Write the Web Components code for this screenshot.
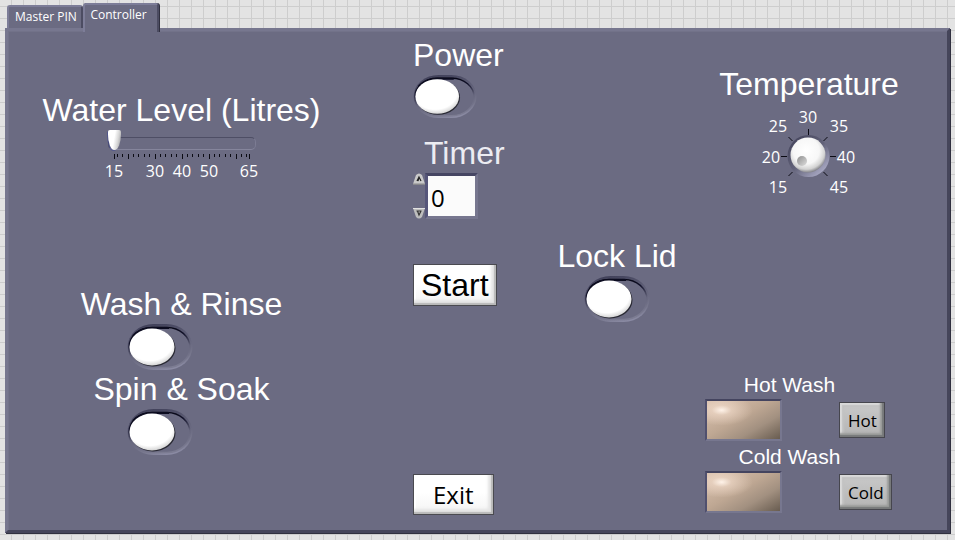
<!DOCTYPE html>
<html lang="en">
<head>
<meta charset="utf-8">
<title>Washing Machine Controller</title>
<style>
  html { height: 100%; }
  body {
    margin: 0; min-height: 100%; box-sizing: border-box; padding: 3px 5px 7px 5px;
    display: flex; flex-direction: column;
    font-family: "Liberation Sans", Arial, sans-serif; color: #fff;
    background:
      linear-gradient(90deg, #cdcdcd 1px, transparent 1px) 11px 0 / 12px 12px,
      linear-gradient(#cdcdcd 1px, transparent 1px) 0 6px / 12px 12px #e3e3e3;
    --ui: "Open Sans", "Noto Sans", sans-serif;
    --panel: #6b6b82;
  }
</style>
</head>
<body>
<wm-tabs></wm-tabs>
<wm-panel>
  <wm-column style="--top:61px; --align:center">
    <wm-slider label="Water Level (Litres)"></wm-slider>
    <wm-switch label="Wash &amp; Rinse" style="--before:105px; --shift:42px"></wm-switch>
    <wm-switch label="Spin &amp; Soak" style="--shift:42px"></wm-switch>
  </wm-column>
  <wm-column style="--top:6px; --align:flex-start">
    <wm-switch label="Power" style="--w:64px; --h:45px; --align:flex-start"></wm-switch>
    <wm-number label="Timer" style="--before:16px"></wm-number>
    <wm-button style="--before:45px; --face:'Liberation Sans'; --size:32px; --pad:7px; --height:42px">Start</wm-button>
    <wm-button style="--before:168px; --size:24px; --pad:19px; --height:41px">Exit</wm-button>
  </wm-column>
  <wm-column style="--top:207px; --align:center">
    <wm-switch label="Lock Lid"></wm-switch>
  </wm-column>
  <wm-column style="--top:35px; --align:center">
    <wm-knob label="Temperature"></wm-knob>
    <wm-led label="Hot Wash" style="--before:173px"><wm-button class="grey">Hot</wm-button></wm-led>
    <wm-led label="Cold Wash" style="--before:4px"><wm-button class="grey">Cold</wm-button></wm-led>
  </wm-column>
</wm-panel>

<script>
let serial = 0;
const define = (name, render) => customElements.define(name, class extends HTMLElement {
  constructor() {
    super();
    this.attachShadow({ mode: "open" });
  }
  connectedCallback() {
    const t = document.createElement("template");
    t.innerHTML = render(this.getAttribute("label") || "", ++serial);
    this.shadowRoot.replaceChildren(t.content.cloneNode(true));
  }
});
const title = `.title { font-size: 32px; line-height: 36px; white-space: nowrap; }`;

define("wm-tabs", () => `
<style>
  :host { display: flex; align-items: flex-end; padding-left: 2px; position: relative; z-index: 1; margin-bottom: -4px; }
  button {
    box-sizing: border-box; font: 12px/16px var(--ui); color: #fff; background: var(--panel);
    border: solid; border-width: 2px 2px 0 2px; border-color: #7d7d98 #4c4c62 #4c4c62 #7d7d98;
    border-radius: 3px 3px 0 0; margin: 0; padding: 2px 4px; text-align: center; white-space: nowrap;
  }
  button:first-child { flex: 0 0 76px; height: 23px; margin-bottom: 4px; padding: 1px 2px 2px 4px; }
  button:last-child { flex: 0 0 76px; height: 29px; padding: 0 5px 8px 0; box-shadow: 1px 0 0 #30303f; }
  div { display: contents; }
</style>
<div role="tablist"><button role="tab" aria-selected="false">Master PIN</button><button role="tab" aria-selected="true">Controller</button></div>`);

define("wm-panel", () => `
<style>
  :host {
    flex: 1; box-sizing: border-box; display: grid; grid-template-columns: 405fr 124fr 160fr 250fr;
    background: var(--panel); border: 3px solid;
    border-color: #77778f #45455a #45455a #77778f;
    box-shadow: inset 1px 1px 0 #727289, 1px 1px 0 #30303f;
  }
  ::slotted(:first-child) { padding-right: 58px; }
  ::slotted(:last-child) { padding: 0 34px 0 8px; }
  ::slotted(*) { box-sizing: border-box; min-width: 0; }
</style><slot></slot>`);

define("wm-column", () => `
<style>
  :host { display: block; }
  div { display: flex; flex-direction: column; align-items: var(--align); padding-top: var(--top); }
</style><div><slot></slot></div>`);

define("wm-switch", (label, id) => `
<style>
  ${title}
  :host { display: flex; flex-direction: column; align-items: var(--align, center); margin-top: var(--before, 0px); gap: 1px; }
  .box { display: grid; width: var(--w, 66px); height: var(--h, 48px); margin-right: var(--shift, 0px); }
  .box > * { grid-area: 1 / 1; width: 100%; height: 100%; margin: 0; }
  input { opacity: 0; }
</style>
<label class="title" for="s">${label.replace("&", "&amp;")}</label>
<span class="box">
  <svg viewBox="0 0 66 48" preserveAspectRatio="none" aria-hidden="true">
    <defs>
      <linearGradient id="rim${id}" x1="0.3" y1="0" x2="0.65" y2="1"><stop offset="0" stop-color="#3f3f58"/><stop offset=".4" stop-color="#5f5f77"/><stop offset=".8" stop-color="#77778d"/><stop offset="1" stop-color="#8c8ca5"/></linearGradient>
      <linearGradient id="edge${id}" x1=".3" y1="0" x2=".6" y2="1"><stop offset="0" stop-color="#02020c"/><stop offset=".3" stop-color="#12122a"/><stop offset=".6" stop-color="#66667d"/><stop offset="1" stop-color="#7c7c92"/></linearGradient>
      <radialGradient id="cap${id}" cx=".45" cy=".36" r=".68"><stop offset="0" stop-color="#fff"/><stop offset=".75" stop-color="#fff"/><stop offset="1" stop-color="#c9c9c9"/></radialGradient>
    </defs>
    <rect x="0.5" y="1" width="65" height="46" rx="26" ry="23" fill="url(#rim${id})"/>
    <rect x="2" y="4.500" width="61" height="40" rx="23" ry="20" fill="#6b6b82" stroke="url(#edge${id})" stroke-width="1.500"/>
    <path d="M6 13Q13 5 25 5H42" fill="none" stroke="#0c0c20" stroke-width="2"/>
    <ellipse cx="26" cy="25" rx="22.500" ry="18.500" fill="#292933"/>
    <ellipse cx="25" cy="24" rx="22.500" ry="18.500" fill="url(#cap${id})"/>
  </svg>
  <input id="s" type="checkbox" role="switch">
</span>`);

define("wm-slider", (label) => {
  let marks = "";
  for (const v of [15, 16, 18, 20, 22, 24, 26, 28, 30, 32, 34, 36, 38, 40, 42, 44, 46, 48, 50, 52, 54, 56, 58, 60, 62, 64, 65]) {
    const big = [15, 20, 30, 40, 50, 60, 65].includes(v);
    const x = Math.round(11 + (v - 15) * 2.7);
    marks += `<rect x="${x}" y="0" width="1" height="${big ? 5 : 3}" fill="#0b0b14"/>`;
  }
  for (const v of [15, 30, 40, 50, 65]) marks += `<text x="${Math.round(11 + (v - 15) * 2.7)}" y="23">${v}</text>`;
  return `
<style>
  ${title}
  :host { display: flex; flex-direction: column; align-items: center; }
  input { appearance: none; background: none; width: 148px; height: 20px; margin: 2px 0 4px; }
  input::-webkit-slider-runnable-track {
    box-sizing: border-box; height: 13px; margin-top: 7px; border: 1px solid; border-radius: 5px;
    border-color: #4e4e65 #7c7c93 #85859c #55556b; background: #6b6b82;
  }
  input::-webkit-slider-thumb {
    appearance: none; width: 13px; height: 20px; margin: -8px 0 0 -1px; border: 0;
    border-radius: 2px 2px 7px 7px / 2px 2px 17px 17px;
    background: linear-gradient(100deg, #fff 45%, #d8d8d8 70%, #8f8f95);
    box-shadow: -1px 1px 0 #2d3a9a66;
  }
  svg { width: 158px; height: 27px; overflow: visible; }
  text { font: 16px var(--ui); fill: #fff; text-anchor: middle; }
</style>
<label class="title" for="r">${label}</label>
<input id="r" type="range" min="15" max="65" value="15">
<svg viewBox="0 0 158 27">${marks}</svg>`;
});

define("wm-number", (label) => `
<style>
  ${title}
  :host { display: flex; flex-direction: column; margin-top: var(--before, 0px); gap: 2px; }
  .title { padding-left: 11px; color: #ececf2; }
  .row { display: flex; height: 46px; }
  .spin { display: flex; flex-direction: column; justify-content: space-between; width: 12px; }
  button { display: block; width: 12px; height: 12px; border: 0; padding: 0; background: none; }
  svg { display: block; width: 12px; height: 12px; }
  input {
    box-sizing: border-box; width: 53px; height: 46px; border: 3px solid; border-color: #464663 #77778f #77778f #56567a;
    margin: 0; padding: 3px 3px 0; background: #fbfbfb; color: #000; font: 24px var(--ui);
  }
</style>
<label class="title" for="n">${label}</label>
<div class="row">
  <div class="spin">
    <button aria-label="Increase"><svg viewBox="0 0 12 12"><path d="M0 11L3 2Q6-1 9 2L12 11Z" fill="#c9c9c9"/><path d="M0 12H12V10.500H0Z" fill="#88888c"/><path d="M4 8L6 4L8 8M6 4L5 8" fill="none" stroke="#222" stroke-width="1.200"/></svg></button>
    <button aria-label="Decrease"><svg viewBox="0 0 12 12"><path d="M0 1H12L9 10Q6 13 3 10Z" fill="#bdbdbd"/><path d="M0 1H12V2H0Z" fill="#e2e2e2"/><path d="M3.500 4H8.500M4.500 4L6 8L8 4" fill="none" stroke="#333" stroke-width="1.200"/></svg></button>
  </div>
  <input id="n" type="text" inputmode="numeric" value="0">
</div>`);

define("wm-button", () => `
<style>
  :host { display: block; margin-top: var(--before, 0px); }
  :host(.grey) { margin-top: 0; }
  button {
    display: block; box-sizing: border-box; height: var(--height, 36px); padding: 0 var(--pad, 9px); margin: 0;
    border: 1px solid #4a4a50; color: #000; white-space: nowrap;
    font-family: var(--face, var(--ui)); font-size: var(--size, 17px); line-height: 1;
    background: linear-gradient(#fff 45%, #f3f3f3);
    box-shadow: inset -2px -2px 1px #b9b9b9, inset -5px -5px 3px #e4e4e4, inset 2px 2px 1px #fff;
  }
  :host(.grey) button {
    padding: 0 7px 0 8px;
    border: 1px solid #46464e; background: linear-gradient(#c9c9c9, #b4b4b4);
    box-shadow: inset -2px -2px 1px #77797a, inset -4px -4px 2px #9b9d9b, inset 2px 2px 1px #d9d9d9, inset 4px 4px 2px #c2c2c2;
  }
</style><button><slot></slot></button>`);

define("wm-knob", (label, id) => {
  const text = [[15, 24, 87], [20, 17, 57], [25, 24, 26], [30, 54, 17], [35, 85, 26], [40, 92, 57], [45, 85, 87]]
    .map(([v, x, y]) => `<text x="${x}" y="${y}">${v}</text>`).join("");
  return `
<style>
  ${title}
  :host { display: flex; flex-direction: column; align-items: center; gap: 4px; }
  .dial { display: grid; width: 110px; height: 94px; }
  .dial > * { grid-area: 1 / 1; width: 100%; height: 100%; margin: 0; }
  input { opacity: 0; }
  text { font: 16px var(--ui); fill: #fff; text-anchor: middle; }
</style>
<label class="title" for="k">${label}</label>
<div class="dial">
  <svg viewBox="0 0 110 94">
    <defs>
      <linearGradient id="well${id}" x1=".15" y1=".1" x2=".85" y2=".9"><stop offset="0" stop-color="#47475f"/><stop offset=".5" stop-color="#626279"/><stop offset="1" stop-color="#aaaac5"/></linearGradient>
      <radialGradient id="ball${id}" cx=".45" cy=".38" r=".62"><stop offset="0" stop-color="#fff"/><stop offset=".6" stop-color="#f7f7f7"/><stop offset=".85" stop-color="#d2d2d2"/><stop offset="1" stop-color="#85858b"/></radialGradient>
      <linearGradient id="dent${id}" x1="0" y1="0" x2="1" y2="1"><stop offset="0" stop-color="#8e8e8e"/><stop offset="1" stop-color="#dedede"/></linearGradient>
    </defs>
    <path d="M54.500 23V29M27 50.500H33M76 50.500H82M34.500 31L38.500 35M73.500 31L69.500 35M34.500 70L38.500 66M73.500 70L69.500 66" stroke="#0b0b14"/>
    <circle cx="54.500" cy="50" r="21" fill="url(#well${id})"/>
    <circle cx="54" cy="49" r="17.500" fill="url(#ball${id})"/>
    <circle cx="48" cy="55" r="5" fill="url(#dent${id})"/>
    ${text}
  </svg>
  <input id="k" type="range" min="15" max="45" value="15">
</div>`;
});

define("wm-led", (label) => `
<style>
  :host { display: block; align-self: flex-start; width: 185px; margin-top: var(--before, 0px); }
  .title { width: 169px; font-size: 21px; line-height: 24px; text-align: center; margin-bottom: 2px; }
  .row { display: grid; grid-template-columns: 134px auto; align-items: center; justify-content: start; }
  .lamp {
    box-sizing: border-box; width: 77px; height: 42px; border: 2px solid; border-color: #44445f #77778f #77778f #50506e;
    background:
      radial-gradient(ellipse at 20% 24%, #fff3e9 0, #f2dccb99 12%, transparent 38%),
      linear-gradient(150deg, #d5bdaa 10%, #bea793 45%, #a29080 70%, #685c50);
  }
</style>
<div class="title" id="l">${label}</div>
<div class="row"><div class="lamp" role="img" aria-labelledby="l"></div><slot></slot></div>`);
</script>
</body>
</html>
